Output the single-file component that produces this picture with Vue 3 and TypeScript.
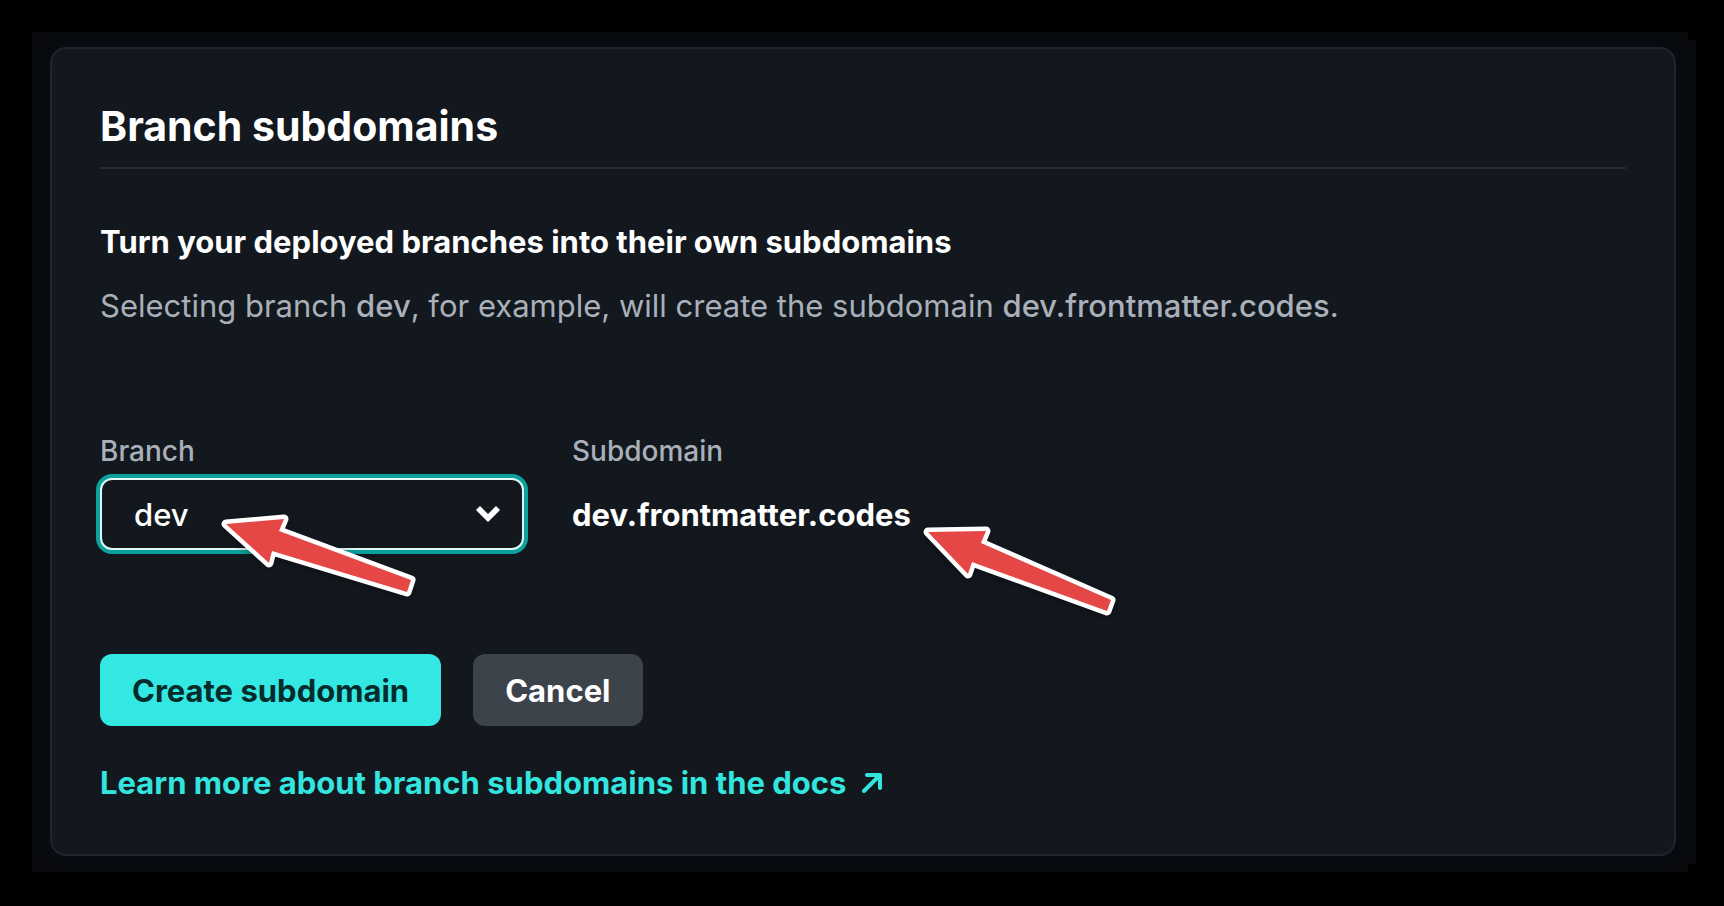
<script setup lang="ts">
import { computed, ref } from 'vue'

const site = 'frontmatter.codes'
const branches: string[] = ['dev']
const branch = ref<string>('dev')
const subdomain = computed<string>(() => `${branch.value}.${site}`)
</script>

<template>
  <main class="frame">
    <section class="card" aria-labelledby="title">
      <h1 id="title" class="title">Branch subdomains</h1>

      <h2 class="lead">Turn your deployed branches into their own subdomains</h2>
      <p class="text">
        Selecting branch <strong>dev</strong>, for example, will create the subdomain
        <strong>dev.frontmatter.codes</strong>.
      </p>

      <form class="form" @submit.prevent>
        <div class="fields">
          <div class="field branch-field">
            <label class="label" for="branch">Branch</label>
            <div class="select-wrap">
              <select id="branch" v-model="branch" class="select">
                <option v-for="name in branches" :key="name" :value="name">{{ name }}</option>
              </select>
              <svg class="chevron" viewBox="0 0 24 16" aria-hidden="true">
                <path d="M0 4 4 0 12 8 20 0 24 4 12 16Z" />
              </svg>
            </div>
            <svg class="arrow arrow-branch" viewBox="0 0 200 90" aria-hidden="true">
              <path d="M6 14 64 9 59 21 191 70 187 82 52 41 49 53Z" />
            </svg>
          </div>

          <div class="field">
            <label class="label" for="subdomain">Subdomain</label>
            <output id="subdomain" class="value" for="branch">{{ subdomain }}</output>
            <svg class="arrow arrow-subdomain" viewBox="0 0 200 100" aria-hidden="true">
              <path d="M8 12 66 11 61 23 191 80 187 91 52 42 48 54Z" />
            </svg>
          </div>
        </div>

        <div class="actions">
          <button class="button primary" type="submit">Create subdomain</button>
          <button class="button secondary" type="button">Cancel</button>
        </div>
      </form>

      <a class="docs" href="#docs">
        Learn more about branch subdomains in the docs
        <svg class="external" viewBox="0 0 20 20" aria-hidden="true">
          <path d="M2 18 17 3M5 2H18V15" />
        </svg>
      </a>
    </section>
  </main>
</template>

<style>
body {
  margin: 0;
  background: #000;
}
</style>

<style scoped>
.frame {
  box-sizing: border-box;
  margin: 32px 28px 0 32px;
  padding: 15px 20px 16px 18px;
  background: #080a0d;
  clip-path: polygon(
    0 0,
    calc(100% - 8px) 0,
    calc(100% - 8px) 8px,
    100% 8px,
    100% calc(100% - 8px),
    calc(100% - 8px) calc(100% - 8px),
    calc(100% - 8px) 100%,
    0 100%
  );
  color: #fff;
  font-family: Inter, 'Liberation Sans', sans-serif;
  font-size: 31px;
}

.card {
  padding: 48px 48px 47px;
  border: 2px solid #20242b;
  border-radius: 16px;
  background: #13181f;
  box-shadow: 0 0 14px #06101c;
}

.title {
  margin: 0;
  padding-bottom: 12px;
  border-bottom: 2px solid #272c34;
  font-size: 41px;
  font-weight: 650;
  line-height: 58px;
}

.lead {
  margin: 49px 0 16px;
  font-size: 31px;
  font-weight: 650;
  line-height: 48px;
}

.text {
  margin: 0;
  color: #a9b0ba;
  line-height: 48px;
}

.text strong {
  font-weight: 500;
}

.fields {
  display: flex;
  gap: 48px;
  margin-top: 101px;
}

.field {
  position: relative;
}

.branch-field {
  width: 424px;
}

.label {
  display: block;
  margin-bottom: 7px;
  color: #a9b0ba;
  font-size: 28px;
  font-weight: 500;
  line-height: 40px;
}

.select-wrap {
  position: relative;
}

.select {
  box-sizing: border-box;
  display: block;
  width: 100%;
  height: 72px;
  padding: 0 80px 0 32px;
  appearance: none;
  border: 2px solid #e2f8f6;
  border-radius: 12px;
  outline: none;
  background: #13181f;
  box-shadow: 0 0 0 4px #0ba29d;
  color: #fff;
  font: 550 31px Inter, 'Liberation Sans', sans-serif;
}

.chevron {
  position: absolute;
  top: 28px;
  right: 24px;
  width: 24px;
  height: 16px;
  fill: #fff;
  pointer-events: none;
}

.value {
  display: block;
  font-weight: 650;
  line-height: 74px;
}

.arrow {
  position: absolute;
  overflow: visible;
  fill: #e54747;
  stroke: #fff;
  stroke-width: 9px;
  stroke-linejoin: round;
  paint-order: stroke;
  filter: drop-shadow(0 2px 4px rgb(0 0 0 / 35%));
  pointer-events: none;
}

.arrow-branch {
  top: 79px;
  left: 120px;
  width: 200px;
  height: 90px;
}

.arrow-subdomain {
  top: 89px;
  left: 348px;
  width: 200px;
  height: 100px;
}

.actions {
  display: flex;
  gap: 32px;
  margin-top: 102px;
}

.button {
  height: 72px;
  padding: 0 32px;
  border: 0;
  border-radius: 12px;
  font: 650 31px Inter, 'Liberation Sans', sans-serif;
}

.primary {
  background: #33e8e3;
  color: #062b2b;
}

.secondary {
  background: #3d434b;
  color: #fff;
}

.docs {
  display: flex;
  align-items: center;
  gap: 16px;
  width: max-content;
  margin-top: 33px;
  color: #33e5df;
  font-weight: 650;
  line-height: 48px;
  text-decoration: none;
}

.external {
  width: 20px;
  height: 20px;
  fill: none;
  stroke: currentColor;
  stroke-width: 4px;
  stroke-linecap: round;
  stroke-linejoin: round;
}
</style>
